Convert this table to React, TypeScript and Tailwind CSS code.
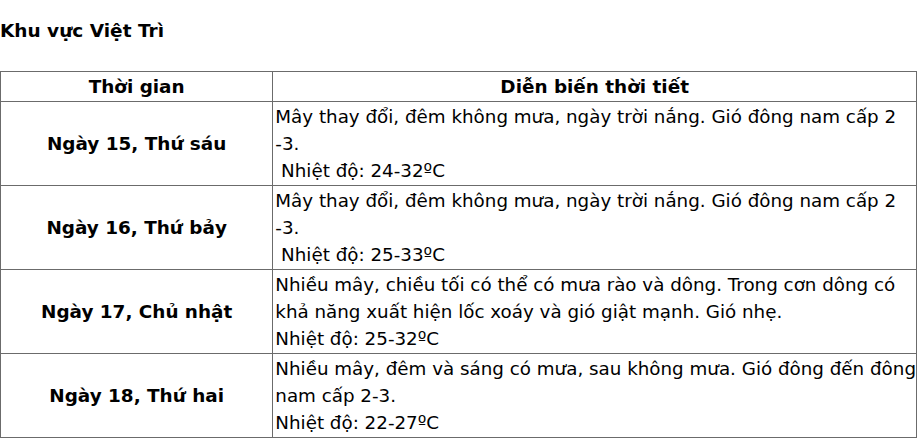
import React from "react";

const rows = [
  {
    day: "Ngày 15, Thứ sáu",
    lines: ["Mây thay đổi, đêm không mưa, ngày trời nắng. Gió đông nam cấp 2", "-3.", "\u00a0Nhiệt độ: 24-32ºC"],
  },
  {
    day: "Ngày 16, Thứ bảy",
    lines: ["Mây thay đổi, đêm không mưa, ngày trời nắng. Gió đông nam cấp 2", "-3.", "\u00a0Nhiệt độ: 25-33ºC"],
  },
  {
    day: "Ngày 17, Chủ nhật",
    lines: ["Nhiều mây, chiều tối có thể có mưa rào và dông. Trong cơn dông có", "khả năng xuất hiện lốc xoáy và gió giật mạnh. Gió nhẹ.", "Nhiệt độ: 25-32ºC"],
  },
  {
    day: "Ngày 18, Thứ hai",
    lines: ["Nhiều mây, đêm và sáng có mưa, sau không mưa. Gió đông đến đông", "nam cấp 2-3.", "Nhiệt độ: 22-27ºC"],
  },
];

export default function App() {
  return (
    <div className="w-[920px] h-[438px] overflow-hidden bg-white text-black" style={{ fontFamily: "Tahoma, 'DejaVu Sans', Verdana, sans-serif" }}>
      <div className="pt-[19px] h-[71px]">
        <h1 className="text-[18.5px] font-bold leading-[24px]">Khu vực Việt Trì</h1>
      </div>
      <table className="w-[917px] border-collapse text-[18.3px] leading-[27px]">
        <colgroup>
          <col className="w-[273px]" />
          <col />
        </colgroup>
        <thead>
          <tr>
            <th className="border border-[#6b6b6b] h-[30px] p-0 text-[18.4px] font-bold text-center">Thời gian</th>
            <th className="border border-[#6b6b6b] h-[30px] p-0 text-[18.4px] font-bold text-center">Diễn biến thời tiết</th>
          </tr>
        </thead>
        <tbody>
          {rows.map((r) => (
            <tr key={r.day}>
              <td className="border border-[#6b6b6b] h-[84px] p-0 text-center align-middle text-[18.4px] font-bold">{r.day}</td>
              <td className="border border-[#6b6b6b] h-[84px] py-[1px] pl-[2px] pr-0 align-middle">
                {r.lines.map((l, i) => (
                  <div key={i} className="whitespace-nowrap leading-[27px]">{l}</div>
                ))}
              </td>
            </tr>
          ))}
        </tbody>
      </table>
    </div>
  );
}
